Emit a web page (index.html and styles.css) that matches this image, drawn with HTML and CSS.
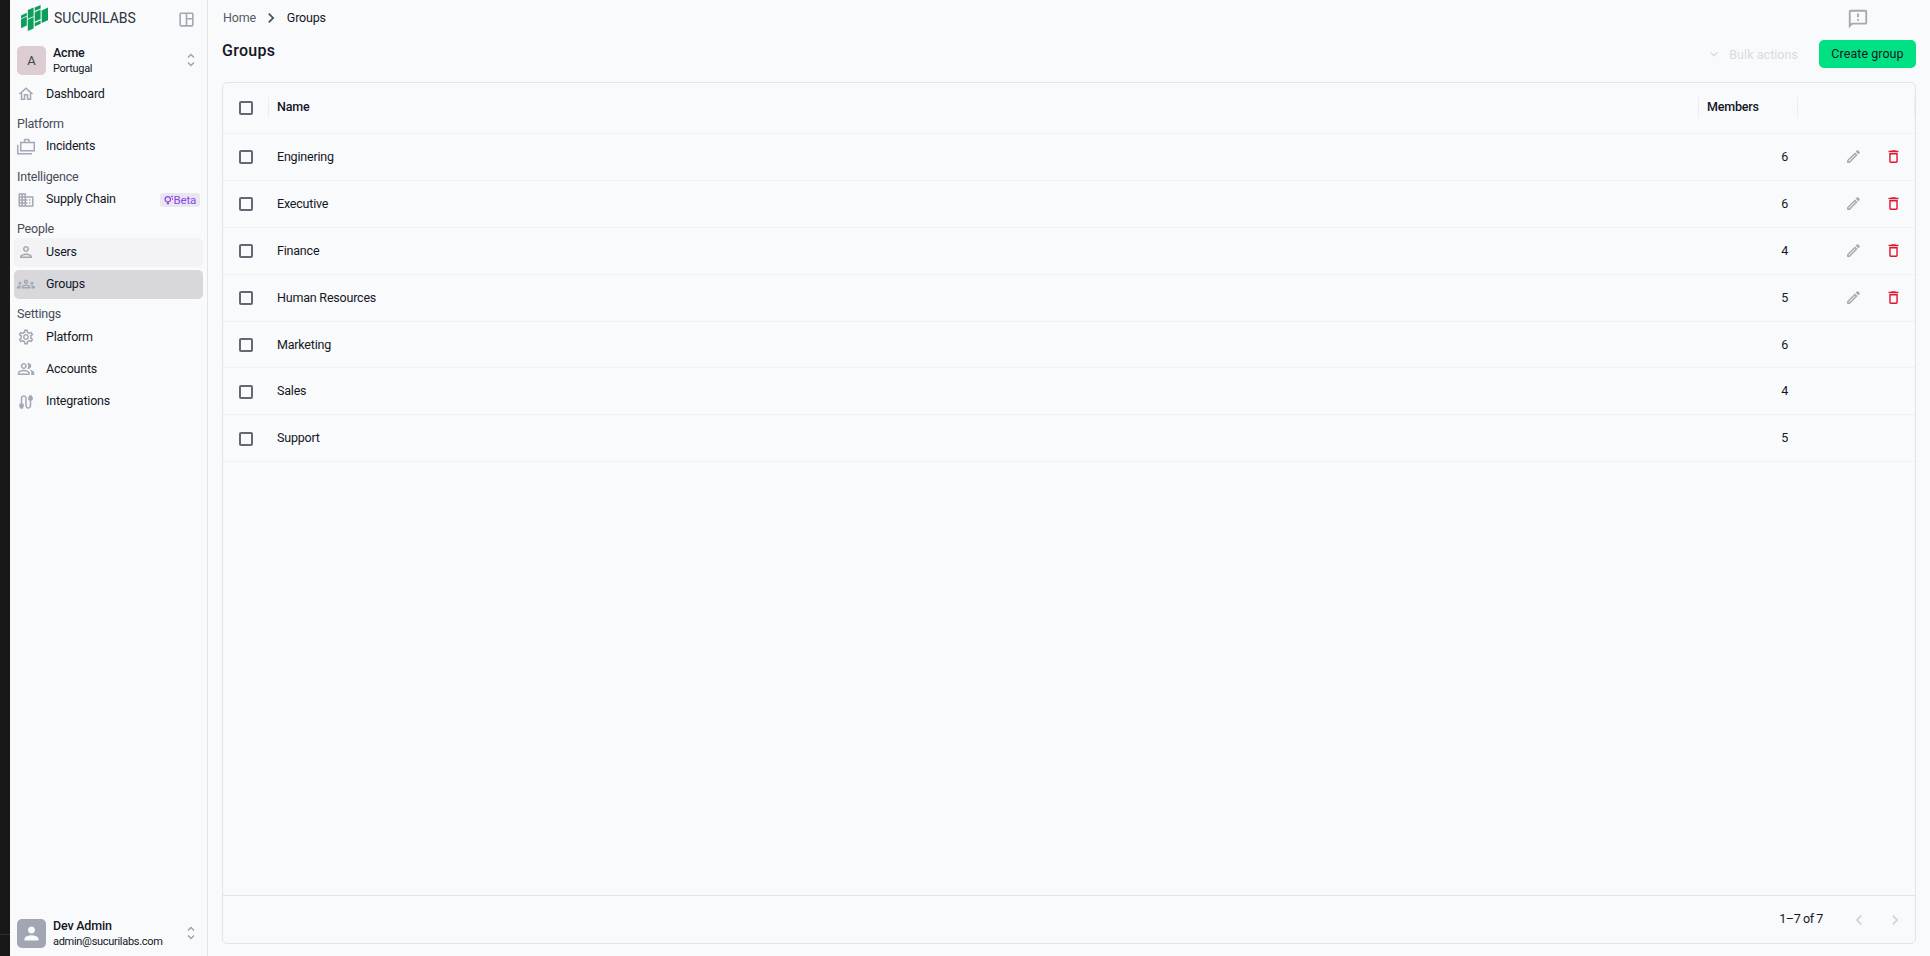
FILE: index.html
```html
<!DOCTYPE html>
<html lang="en">
  <head>
    <meta charset="UTF-8" />
    <meta name="viewport" content="width=device-width, initial-scale=1" />
    <title>Groups</title>
    <link rel="stylesheet" href="styles.css">
  </head>
  <body>
    <svg class="sprite" aria-hidden="true">
      <symbol id="home" viewBox="0 0 24 24"><path d="m12 5.69 5 4.5V18h-2v-6H9v6H7v-7.81zM12 3 2 12h3v8h6v-6h2v6h6v-8h3z"/></symbol>
      <symbol id="cases" viewBox="0 0 24 24"><path d="M17 5V3c0-1.100-.9-2-2-2h-4c-1.100 0-2 .9-2 2v2H4v13h20V5zM11 3h4v2h-4zm11 13H6V7h16zM2 9H0v13h20v-2H2z"/></symbol>
      <symbol id="domain" viewBox="0 0 24 24"><path d="M12 7V3H2v18h20V7zM6 19H4v-2h2zm0-4H4v-2h2zm0-4H4V9h2zm0-4H4V5h2zm4 12H8v-2h2zm0-4H8v-2h2zm0-4H8V9h2zm0-4H8V5h2zm10 12h-8v-2h2v-2h-2v-2h2v-2h-2V9h8zm-2-8h-2v2h2zm0 4h-2v2h2z"/></symbol>
      <symbol id="person" viewBox="0 0 24 24"><path d="M12 6c1.100 0 2 .9 2 2s-.9 2-2 2-2-.9-2-2 .9-2 2-2m0 10c2.700 0 5.800 1.290 6 2H6c.23-.72 3.310-2 6-2m0-12C9.790 4 8 5.790 8 8s1.790 4 4 4 4-1.790 4-4-1.790-4-4-4m0 10c-2.670 0-8 1.340-8 4v2h16v-2c0-2.660-5.330-4-8-4"/></symbol>
      <symbol id="groups" viewBox="0 0 24 24"><path d="M4 13c1.100 0 2-.9 2-2s-.9-2-2-2-2 .9-2 2 .9 2 2 2m1.130 1.100c-.37-.06-.74-.1-1.130-.1-.99 0-1.930.21-2.780.58C.48 14.900 0 15.620 0 16.430V18h4.500v-1.610c0-.83.23-1.610.63-2.290M20 13c1.100 0 2-.9 2-2s-.9-2-2-2-2 .9-2 2 .9 2 2 2m4 3.430c0-.81-.48-1.530-1.220-1.850-.85-.37-1.790-.58-2.780-.58-.39 0-.76.04-1.130.1.4.68.63 1.460.63 2.290V18H24zm-7.760-2.780c-1.170-.52-2.610-.9-4.240-.9s-3.070.39-4.240.9C6.680 14.130 6 15.210 6 16.390V18h12v-1.610c0-1.180-.68-2.260-1.760-2.740M8.070 16c.09-.23.13-.39.91-.69.97-.38 1.990-.56 3.020-.56s2.050.18 3.020.56c.77.3.81.46.91.69zM12 8c.55 0 1 .45 1 1s-.45 1-1 1-1-.45-1-1 .45-1 1-1m0-2c-1.660 0-3 1.340-3 3s1.340 3 3 3 3-1.340 3-3-1.340-3-3-3"/></symbol>
      <symbol id="settings" viewBox="0 0 24 24"><path d="M19.430 12.980c.04-.32.07-.64.07-.98s-.03-.66-.07-.98l2.110-1.650c.19-.15.24-.42.12-.64l-2-3.460c-.09-.16-.26-.25-.44-.25-.06 0-.12.01-.17.03l-2.490 1c-.52-.4-1.080-.73-1.690-.98l-.38-2.650C14.460 2.180 14.250 2 14 2h-4c-.25 0-.46.18-.49.42l-.38 2.650c-.61.25-1.170.59-1.690.98l-2.490-1c-.06-.02-.12-.03-.18-.03-.17 0-.34.09-.43.25l-2 3.460c-.13.22-.07.49.12.64l2.110 1.650c-.04.32-.07.65-.07.98s.03.66.07.98l-2.110 1.650c-.19.15-.24.42-.12.64l2 3.460c.09.16.26.25.44.25.06 0 .12-.01.17-.03l2.490-1c.52.4 1.080.73 1.690.98l.38 2.650c.03.24.24.42.49.42h4c.25 0 .46-.18.49-.42l.38-2.650c.61-.25 1.170-.59 1.690-.98l2.490 1c.06.02.12.03.18.03.17 0 .34-.09.43-.25l2-3.460c.12-.22.07-.49-.12-.64zm-1.980-1.710c.04.31.05.52.05.73s-.02.43-.05.73l-.14 1.130.89.7 1.080.84-.7 1.210-1.270-.51-1.040-.42-.9.68c-.43.32-.84.56-1.250.73l-1.060.43-.16 1.130-.2 1.350h-1.400l-.19-1.350-.16-1.130-1.060-.43c-.43-.18-.83-.41-1.230-.71l-.91-.7-1.060.43-1.270.51-.7-1.210 1.080-.84.89-.7-.14-1.130c-.03-.31-.05-.54-.05-.74s.02-.43.05-.73l.14-1.130-.89-.7-1.080-.84.7-1.210 1.270.51 1.040.42.9-.68c.43-.32.84-.56 1.250-.73l1.060-.43.16-1.130.2-1.350h1.390l.19 1.350.16 1.130 1.060.43c.43.18.83.41 1.230.71l.91.7 1.060-.43 1.270-.51.7 1.210-1.070.85-.89.7zM12 8c-2.210 0-4 1.790-4 4s1.790 4 4 4 4-1.790 4-4-1.790-4-4-4m0 6c-1.100 0-2-.9-2-2s.9-2 2-2 2 .9 2 2-.9 2-2 2"/></symbol>
      <symbol id="people" viewBox="0 0 24 24"><path d="M16.670 13.130C18.040 14.060 19 15.320 19 17v3h4v-3c0-2.180-3.570-3.470-6.330-3.870M15 12c2.210 0 4-1.790 4-4s-1.790-4-4-4c-.47 0-.91.1-1.330.24C14.500 5.270 15 6.580 15 8s-.5 2.730-1.330 3.760c.42.14.86.24 1.330.24m-6 0c2.210 0 4-1.790 4-4s-1.790-4-4-4-4 1.790-4 4 1.790 4 4 4m0-6c1.100 0 2 .9 2 2s-.9 2-2 2-2-.9-2-2 .9-2 2-2m0 7c-2.670 0-8 1.340-8 4v3h16v-3c0-2.660-5.330-4-8-4m6 5H3v-.99C3.200 16.290 6.300 15 9 15s5.800 1.290 6 2z"/></symbol>
      <symbol id="cable" viewBox="0 0 24 24"><path d="M20 5V4c0-.55-.45-1-1-1h-2c-.55 0-1 .45-1 1v1h-1v4c0 .55.45 1 1 1h1v7c0 1.100-.9 2-2 2s-2-.9-2-2V7c0-2.210-1.790-4-4-4S5 4.790 5 7v7H4c-.55 0-1 .45-1 1v4h1v1c0 .55.45 1 1 1h2c.55 0 1-.45 1-1v-1h1v-4c0-.55-.45-1-1-1H7V7c0-1.100.9-2 2-2s2 .9 2 2v10c0 2.210 1.790 4 4 4s4-1.790 4-4v-7h1c.55 0 1-.45 1-1V5z"/></symbol>
      <symbol id="edit" viewBox="0 0 24 24"><path d="m14.060 9.020.92.92L5.920 19H5v-.92zM17.660 3c-.25 0-.51.1-.7.290l-1.830 1.830 3.750 3.750 1.830-1.830c.39-.39.39-1.020 0-1.410l-2.340-2.340c-.2-.2-.45-.29-.71-.29m-3.600 3.190L3 17.250V21h3.750L17.810 9.940z"/></symbol>
      <symbol id="delete" viewBox="0 0 24 24"><path d="M6 19c0 1.100.9 2 2 2h8c1.100 0 2-.9 2-2V7H6zM8 9h8v10H8zm7.500-5-1-1h-5l-1 1H5v2h14V4z"/></symbol>
      <symbol id="feedback" viewBox="0 0 24 24"><path d="M20 2H4c-1.100 0-2 .9-2 2v18l4-4h14c1.100 0 2-.9 2-2V4c0-1.100-.9-2-2-2m0 14H5.200L4 17.200V4h16zm-9-4h2v2h-2zm0-6h2v4h-2z"/></symbol>
      <symbol id="panel" viewBox="0 0 24 24"><path d="M19 3H5c-1.100 0-2 .9-2 2v14c0 1.100.9 2 2 2h14c1.100 0 2-.9 2-2V5c0-1.100-.9-2-2-2M5 19V5h6v14zm14 0h-6v-7h6zm0-9h-6V5h6z"/></symbol>
      <symbol id="unfold" viewBox="0 0 10 14"><path class="line" d="M2 4.500 5 1.500l3 3M2 9.500l3 3 3-3"/></symbol>
      <symbol id="right" viewBox="0 0 24 24"><path d="M10 6 8.590 7.410 13.170 12l-4.580 4.590L10 18l6-6z"/></symbol>
      <symbol id="left" viewBox="0 0 24 24"><path d="M15.410 7.410 14 6l-6 6 6 6 1.410-1.410L10.830 12z"/></symbol>
      <symbol id="down" viewBox="0 0 24 24"><path d="M7.410 8.590 12 13.170l4.590-4.580L18 10l-6 6-6-6z"/></symbol>
      <symbol id="bulb" viewBox="0 0 10 10"><path class="line" d="M3 7C0 5.500.8 1.700 3.800 1.700S7.600 5.500 4.800 7zM2.800 8.700h2.200M7.200 1.500h1.600M8 4h1"/></symbol>
    </svg>

    <div class="strip"></div>
    <aside>
      <div class="brand">
        <svg class="logo" viewBox="0 0 27 26">
          <path d="M0 10.400 5.800 7.800v3L0 13.400zM0 14.200l5.800-2.600v9L0 23.200zM6.800 5l5.800-2.600v8.800l-5.800 2.600zM6.800 14.700l5.800-2.600v11.300L6.800 26zM13.700 2.600 19.600 0v3.500l-5.900 2.600zM13.700 7.200l5.900-2.600v9.500l-5.900 2.600zM13.700 18l5.900-2.600v3.400l-5.900 2.600zM20.700 5.400 27 2.600v12.600l-6.300 2.800z"/>
        </svg>
        <span class="brand-name">SUCURILABS</span>
        <svg class="toggle"><use href="#panel"/></svg>
      </div>
      <div class="account">
        <div class="avatar tenant">A</div>
        <div class="who"><b>Acme</b><span>Portugal</span></div>
        <svg class="unfold"><use href="#unfold"/></svg>
      </div>
      <nav>
        <a><svg><use href="#home"/></svg><span>Dashboard</span></a>
        <h2>Platform</h2>
        <a><svg><use href="#cases"/></svg><span>Incidents</span></a>
        <h2>Intelligence</h2>
        <a><svg><use href="#domain"/></svg><span>Supply Chain</span><em class="beta"><svg><use href="#bulb"/></svg>Beta</em></a>
        <h2>People</h2>
        <a class="hover"><svg><use href="#person"/></svg><span>Users</span></a>
        <a class="active"><svg><use href="#groups"/></svg><span>Groups</span></a>
        <h2>Settings</h2>
        <a><svg><use href="#settings"/></svg><span>Platform</span></a>
        <a><svg><use href="#people"/></svg><span>Accounts</span></a>
        <a><svg><use href="#cable"/></svg><span>Integrations</span></a>
      </nav>
      <div class="account user">
        <div class="avatar"><svg viewBox="0 0 24 24"><path d="M12 12c2.210 0 4-1.790 4-4s-1.790-4-4-4-4 1.790-4 4 1.790 4 4 4m0 2c-2.670 0-8 1.340-8 4v2h16v-2c0-2.660-5.330-4-8-4"/></svg></div>
        <div class="who"><b>Dev Admin</b><span>admin@sucurilabs.com</span></div>
        <svg class="unfold"><use href="#unfold"/></svg>
      </div>
    </aside>

    <main>
      <div class="topbar">
        <span class="crumb">Home</span>
        <svg class="sep"><use href="#right"/></svg>
        <span>Groups</span>
        <svg class="feedback"><use href="#feedback"/></svg>
      </div>
      <div class="heading">
        <h1>Groups</h1>
        <button class="bulk" disabled><svg><use href="#down"/></svg>Bulk actions</button>
        <button class="create">Create group</button>
      </div>
      <section class="grid">
        <div class="row head">
          <div class="check"><i></i></div>
          <div class="name">Name</div>
          <div class="members">Members</div>
          <div class="actions"></div>
        </div>
        <div id="rows"></div>
        <div class="footer">
          <span>1–7 of 7</span>
          <svg><use href="#left"/></svg>
          <svg><use href="#right"/></svg>
        </div>
      </section>
    </main>

    <script>
      const groups = [
        { name: "Enginering", members: 6, editable: true },
        { name: "Executive", members: 6, editable: true },
        { name: "Finance", members: 4, editable: true },
        { name: "Human Resources", members: 5, editable: true },
        { name: "Marketing", members: 6 },
        { name: "Sales", members: 4 },
        { name: "Support", members: 5 },
      ];

      const actions = `
        <svg class="edit"><use href="#edit"/></svg>
        <svg class="delete"><use href="#delete"/></svg>`;

      document.getElementById("rows").innerHTML = groups
        .map(
          (group) => `
          <div class="row">
            <div class="check"><i></i></div>
            <div class="name">${group.name}</div>
            <div class="members">${group.members}</div>
            <div class="actions">${group.editable ? actions : ""}</div>
          </div>`
        )
        .join("");
    </script>
  </body>
</html>
```
FILE: styles.css
```css
* {
  box-sizing: border-box;
}

body {
  margin: 0;
  height: 100vh;
  display: flex;
  overflow: hidden;
  background: #f9fafc;
  color: #14171f;
  font-family: Roboto, "Liberation Sans", sans-serif;
  font-size: 12.5px;
  letter-spacing: -0.2px;
}

svg {
  fill: currentColor;
  flex: none;
}

.line {
  fill: none;
  stroke: currentColor;
  stroke-width: 1.3;
}

.sprite {
  display: none;
}

.strip {
  width: 10px;
  background: linear-gradient(#181818 934px, #28323a 934px, #28323a 935px, #181818 935px);
}

aside {
  width: 198px;
  border-right: 1px solid #e2e4e9;
  display: flex;
  flex-direction: column;
}

.brand {
  display: flex;
  align-items: center;
  height: 36px;
  padding: 0 14px 0 11px;
}

.logo {
  width: 27px;
  height: 26px;
  fill: #0c9f5c;
}

.brand-name {
  margin: 0 0 1px 6px;
  font-size: 14px;
  letter-spacing: 0;
  color: #2d3340;
}

.toggle {
  width: 19px;
  height: 19px;
  margin: 2px -3px 0 auto;
  color: #a3a8b2;
}

.account {
  display: flex;
  align-items: center;
  height: 29px;
  margin: 10px 11px 5px 7px;
}

.avatar {
  width: 29px;
  height: 29px;
  border-radius: 5px;
  display: flex;
  align-items: center;
  justify-content: center;
  background: #a1a6b2;
  color: #f9fafc;
}

.avatar svg {
  width: 21px;
  height: 21px;
}

.tenant {
  padding-bottom: 1px;
  background: #dccdd3;
  color: #41454f;
  font-size: 13px;
}

.who {
  margin-left: 7px;
  display: flex;
  flex-direction: column;
  line-height: 16px;
}

.who b {
  font-weight: 500;
}

.who span {
  font-size: 11px;
  line-height: 15px;
  letter-spacing: -0.3px;
}

.unfold {
  width: 10px;
  height: 14px;
  margin: 0 0 1px auto;
  color: #9a9fa9;
}

nav {
  flex: 1;
  padding: 0 4px;
}

nav a {
  display: flex;
  align-items: center;
  height: 28.8px;
  margin-bottom: 3.5px;
  padding: 0 3px;
  border-radius: 5px;
}

nav a > svg {
  width: 18px;
  height: 18px;
  color: #a3a8b2;
}

nav a span {
  margin: 0 0 2px 11px;
}

nav .hover {
  background: #f3f3f5;
}

nav .active {
  background: #d7d7dc;
}

nav h2 {
  margin: 0;
  padding: 3px 3px 0;
  height: 20.3px;
  line-height: 17px;
  font-size: 12.5px;
  font-weight: 400;
  color: #474c58;
}

.beta {
  display: flex;
  align-items: center;
  margin-left: auto;
  height: 14px;
  padding: 0 4px;
  border-radius: 3px;
  background: #e9e6f1;
  color: #8b45ea;
  font-size: 11.5px;
  font-style: normal;
}

.beta svg {
  width: 10px;
  height: 10px;
}

.user {
  margin-bottom: 8px;
}

main {
  flex: 1;
  padding: 0 14px;
  display: flex;
  flex-direction: column;
}

.topbar {
  display: flex;
  align-items: center;
  height: 36px;
  padding: 0 0 1px 1px;
}

.topbar .crumb {
  color: #565b66;
}

.sep {
  width: 20px;
  height: 20px;
  margin: 1px 6px 0 5px;
  color: #474c58;
}

.feedback {
  width: 22px;
  height: 22px;
  margin: 2px 47px 0 auto;
  color: #a3a8b2;
}

.heading {
  display: flex;
  align-items: flex-start;
  height: 46px;
  padding-top: 4px;
}

h1 {
  margin: 0 auto 0 0;
  font-size: 16px;
  line-height: 22px;
  font-weight: 500;
  letter-spacing: 0.3px;
}

button {
  display: flex;
  align-items: center;
  height: 28px;
  border: none;
  background: none;
  padding: 0;
  font: inherit;
  letter-spacing: 0.05px;
}

.bulk {
  color: #d9dbdf;
  margin-right: 21px;
}

.bulk svg {
  width: 16px;
  height: 16px;
  margin-right: 7px;
}

.create {
  width: 97px;
  padding-bottom: 1px;
  justify-content: center;
  border-radius: 5px;
  background: #00e183;
  color: #14171f;
}

.grid {
  flex: 1;
  display: flex;
  flex-direction: column;
  margin-bottom: 12px;
  border: 1px solid #e2e4e9;
  border-radius: 5px;
}

.row {
  display: flex;
  align-items: center;
  height: 46.9px;
  border-bottom: 1px solid #f0f1f4;
}

.head {
  height: 51px;
  padding-bottom: 1px;
  font-weight: 500;
}

.check {
  width: 46px;
  padding: 1px 0 0 16px;
}

.head .check {
  padding-top: 0;
}

.check i {
  display: block;
  width: 14px;
  height: 14px;
  border: 2px solid #626975;
  border-radius: 2px;
}

.name {
  flex: 1;
  padding: 0 0 1px 8px;
}

.head .name {
  margin-left: -1px;
}

.members {
  width: 99px;
  padding: 0 9px 1px 0;
  text-align: right;
}

.head .name,
.head .members,
.head .actions {
  height: 21px;
  line-height: 19px;
  border-left: 1px solid #ebedf0;
}

.head .members {
  padding-left: 8px;
  text-align: left;
}

.actions {
  width: 118px;
  display: flex;
  align-items: center;
  padding: 0 0 0 48px;
}

.head .actions {
  border-right: 1px solid #ebedf0;
}

.actions svg {
  width: 17px;
  height: 17px;
}

.edit {
  color: #a3a8b2;
}

.delete {
  margin-left: 23px;
  color: #e0162f;
}

#rows {
  flex: 1;
}

.footer {
  display: flex;
  align-items: center;
  justify-content: flex-end;
  height: 48px;
  padding-right: 10px;
  border-top: 1px solid #e2e4e9;
}

.footer svg {
  width: 20px;
  height: 20px;
  margin-left: 16px;
  color: #d0d2d7;
}

.footer span {
  margin: 0 10px 2px 0;
  letter-spacing: -0.4px;
}
```
